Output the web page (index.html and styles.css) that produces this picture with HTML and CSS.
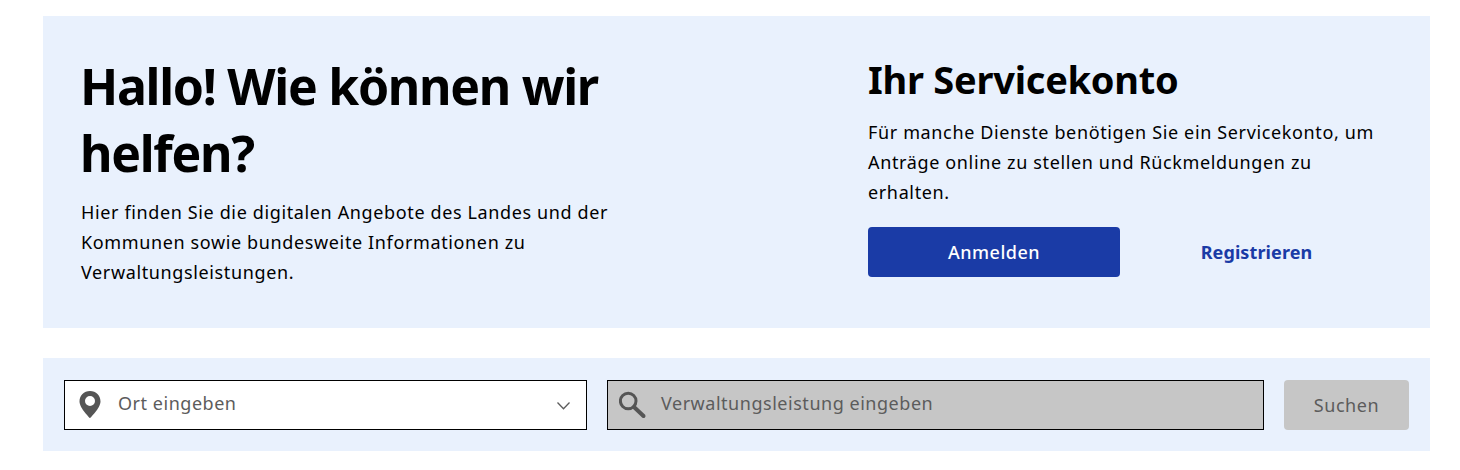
FILE: index.html
```html
<!DOCTYPE html>
<html lang="de">
<head>
  <meta charset="UTF-8">
  <title>Verwaltungsportal</title>
  <link rel="stylesheet" href="styles.css">
</head>
<body>
  <div class="container">
    <section class="hero">
      <div class="hero-intro">
        <h1>Hallo! Wie können wir helfen?</h1>
        <p>Hier finden Sie die digitalen Angebote des Landes und der Kommunen sowie bundesweite Informationen zu Verwaltungsleistungen.</p>
      </div>
      <div class="hero-account">
        <h2>Ihr Servicekonto</h2>
        <p>Für manche Dienste benötigen Sie ein Servicekonto, um Anträge online zu stellen und Rückmeldungen zu erhalten.</p>
        <div class="account-actions">
          <a href="#" class="btn-primary">Anmelden</a>
          <a href="#" class="link-register">Registrieren</a>
        </div>
      </div>
    </section>

    <section class="search-bar">
      <div class="field field-place">
        <svg class="icon" width="22" height="27" viewBox="0 0 22 27"><path fill="#555" fill-rule="evenodd" d="M11 0C4.900 0 0.500 4.600 0.500 10.400 0.500 17 11 27 11 27s10.500-10 10.500-16.600C21.500 4.600 17.100 0 11 0zm0 5a5 5 0 1 1 0 10 5 5 0 0 1 0-10z"/></svg>
        <span class="field-text">Ort eingeben</span>
        <svg class="chevron" width="13" height="8" viewBox="0 0 13 8"><path fill="none" stroke="#5c5c5c" stroke-width="1.300" d="M0.500 0.500l6 6.300 6-6.300"/></svg>
      </div>
      <div class="field field-service">
        <svg class="icon" width="28" height="28" viewBox="0 0 28 28"><circle cx="9.200" cy="10" r="7.800" fill="none" stroke="#555" stroke-width="3"/><path stroke="#555" stroke-width="4" stroke-linecap="round" d="M15 16l9.500 9"/></svg>
        <span class="field-text">Verwaltungsleistung eingeben</span>
      </div>
      <button class="btn-search" disabled>Suchen</button>
    </section>
  </div>
</body>
</html>
```

FILE: styles.css
```css
body {
  margin: 0;
  font-family: "Noto Sans", "Open Sans", sans-serif;
  background-color: #fff;
  color: #000;
}

.container {
  width: 1387px;
  margin-left: 43px;
  padding-top: 16px;
}

/* Hero */
.hero {
  display: flex;
  height: 312px;
  box-sizing: border-box;
  padding: 37px 38px 0;
  background-color: #e9f1fd;
}

.hero-intro {
  width: 787px;
  flex: none;
}

.hero-intro h1 {
  width: 560px;
  margin: 0 0 0 -1px;
  font-size: 50px;
  line-height: 67px;
  font-weight: 700;
  letter-spacing: -1.3px;
}

.hero-intro p {
  width: 560px;
  margin: 10px 0 0;
  font-size: 18px;
  line-height: 30px;
  letter-spacing: 0.63px;
}

.hero-account h2 {
  margin: 0;
  padding-top: 3px;
  font-size: 38px;
  line-height: 46px;
  font-weight: 700;
  letter-spacing: -0.25px;
}

.hero-account p {
  margin: 15px 0 0;
  font-size: 18px;
  line-height: 30px;
  letter-spacing: 0.64px;
}

.account-actions {
  display: flex;
  align-items: center;
  margin-top: 20px;
}

.btn-primary {
  width: 252px;
  height: 50px;
  line-height: 50px;
  text-align: center;
  background-color: #1a3ba6;
  color: #fff;
  border-radius: 4px;
  font-size: 18px;
  font-weight: 500;
  letter-spacing: 0.5px;
  text-decoration: none;
}

.link-register {
  width: 273px;
  text-align: center;
  color: #1a3ba6;
  font-size: 18px;
  font-weight: 700;
  letter-spacing: 0.1px;
  text-decoration: none;
}

/* Search */
.search-bar {
  display: flex;
  align-items: center;
  height: 93px;
  margin-top: 30px;
  padding: 0 21px;
  box-sizing: border-box;
  background-color: #e9f1fd;
}

.field {
  display: flex;
  align-items: center;
  height: 50px;
  box-sizing: border-box;
  border: 1px solid #000;
  padding-left: 14px;
  font-size: 18px;
  letter-spacing: 0.53px;
  color: #5c5c5c;
}

.field-place {
  width: 523px;
  background-color: #fff;
}

.field-service {
  width: 657px;
  margin-left: 20px;
  background-color: #c6c6c6;
  padding-left: 11px;
}

.field-text {
  margin-left: 17px;
  margin-bottom: 4px;
  flex: 1;
}

.field-service .field-text {
  margin-left: 14px;
}

.chevron {
  margin: 2px 16px 0 0;
}

.btn-search {
  width: 125px;
  height: 50px;
  margin-left: 20px;
  border: none;
  border-radius: 4px;
  background-color: #c6c6c6;
  color: #5c5c5c;
  font-family: inherit;
  font-size: 18px;
  letter-spacing: 0.6px;
}
```
